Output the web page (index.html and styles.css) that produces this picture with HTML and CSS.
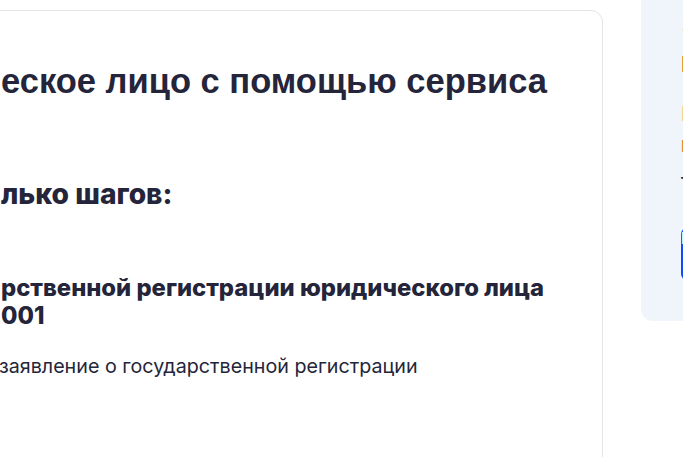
FILE: index.html
```html
<!DOCTYPE html>
<html lang="ru">
<head>
<meta charset="utf-8">
<title>Регистрация юридического лица</title>
<link rel="stylesheet" href="styles.css">
</head>
<body>
<div class="page">
  <main class="card">
    <h1 class="title">еское лицо с помощью сервиса</h1>
    <h2 class="steps">лько шагов:</h2>
    <h3 class="step-title">рственной регистрации юридического лица<br>001</h3>
    <p class="step-text">заявление о государственной регистрации</p>
  </main>
  <aside class="side">
    <div class="side-num">3</div>
    <div class="side-big">Р</div>
    <div class="side-light">Б</div>
    <div class="side-orange">Б</div>
    <div class="side-dark">т</div>
    <div class="side-btn">Начать</div>
  </aside>
</div>
</body>
</html>
```
FILE: styles.css
```css
html, body {
  margin: 0;
  padding: 0;
  background: #ffffff;
  overflow: hidden;
  width: 683px;
  height: 457px;
}
.page {
  display: flex;
  align-items: flex-start;
  margin-left: -24px;
  width: 900px;
}
.card {
  box-sizing: border-box;
  width: 627px;
  height: 600px;
  margin-top: 10px;
  padding: 50px 0 0 24px;
  border: 1px solid #e3e4ea;
  border-radius: 12px;
  background: #fff;
  color: #24253a;
  flex: none;
}
.title {
  margin: 0;
  font-family: "Liberation Sans", Arial, sans-serif;
  font-weight: 700;
  font-size: 34.5px;
  line-height: 40px;
  white-space: nowrap;
}
.steps {
  margin: 76.5px 0 0;
  font-family: Inter, sans-serif;
  font-weight: 800;
  font-size: 28.2px;
  line-height: 32px;
  white-space: nowrap;
}
.step-title {
  margin: 64.5px 0 0;
  font-family: Inter, sans-serif;
  font-weight: 800;
  font-size: 23.8px;
  line-height: 28px;
  white-space: nowrap;
}
.step-text {
  margin: 24px 0 0 -2px;
  font-family: Inter, sans-serif;
  font-weight: 400;
  font-size: 19.7px;
  line-height: 24px;
  white-space: nowrap;
}
.side {
  box-sizing: border-box;
  margin-left: 38px;
  margin-top: -20px;
  width: 300px;
  height: 341px;
  padding: 36px 0 0 40px;
  background: #f0f4fb;
  border-radius: 12px;
  font-family: Inter, sans-serif;
  font-weight: 700;
  flex: none;
}
.side-num {
  font-size: 18px;
  line-height: 22px;
  color: #e8862f;
  margin-left: 1px;
}
.side-big {
  margin-top: 14px;
  font-size: 22px;
  line-height: 24px;
  color: #d3691f;
}
.side-light {
  margin-top: 26px;
  font-size: 20px;
  line-height: 24px;
  color: #f6cf8f;
}
.side-orange {
  margin-top: 10px;
  font-size: 16px;
  line-height: 20px;
  color: #ea8a3a;
}
.side-dark {
  margin-top: 14px;
  font-size: 16px;
  line-height: 20px;
  color: #25263a;
}
.side-btn {
  margin-top: 38px;
  width: 200px;
  height: 52px;
  border-radius: 6px;
  background: #0d4cf6;
  color: #fff;
}
```
